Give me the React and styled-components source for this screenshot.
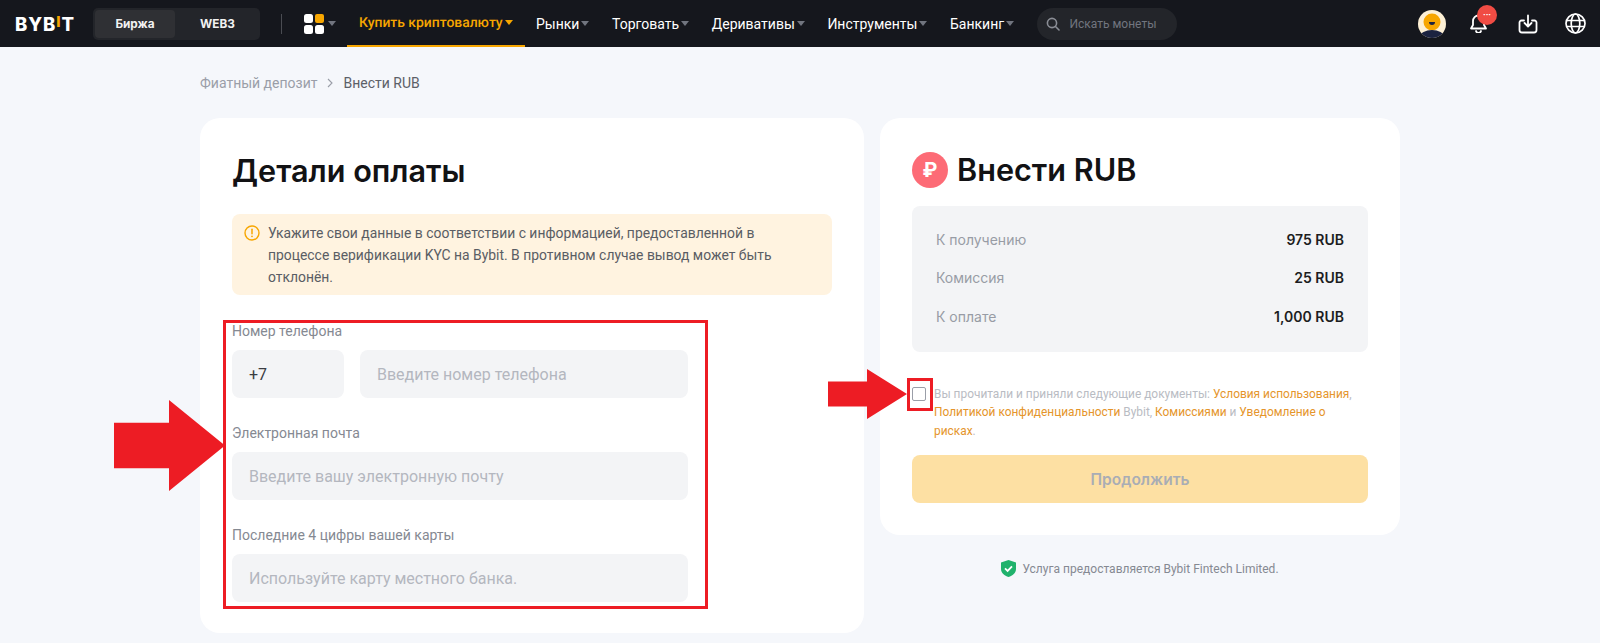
import React from "react";
import styled, { createGlobalStyle } from "styled-components";

const NAV_ITEMS = ["Рынки", "Торговать", "Деривативы", "Инструменты", "Банкинг"];

const SUMMARY = [
  { label: "К получению", value: "975 RUB" },
  { label: "Комиссия", value: "25 RUB" },
  { label: "К оплате", value: "1,000 RUB" },
];

const Global = createGlobalStyle`
  html, body {
    margin: 0;
    padding: 0;
    height: 643px;
    overflow: hidden;
    background: #f5f7fb;
    font-family: "Roboto", "Liberation Sans", sans-serif;
  }
  * { box-sizing: border-box; }
`;

const Header = styled.header`
  display: flex;
  align-items: center;
  height: 47px;
  padding-left: 15px;
  background: #15171d;
  color: #fff;
`;

const Logo = styled.div`
  width: 60px;
  font-family: "Inter", sans-serif;
  font-size: 18.500px;
  font-weight: 800;
  letter-spacing: 0.9px;
  white-space: nowrap;
`;

const LogoMark = styled.span`
  position: relative;
  top: -4px;
  color: #f7a600;
  font-size: 15px;
`;

const Tabs = styled.div`
  display: flex;
  width: 167px;
  height: 32px;
  margin-left: 18px;
  padding: 2px;
  border-radius: 5px;
  background: #23252a;
`;

const Tab = styled.div`
  display: flex;
  flex: ${({ $active }) => ($active ? "0 0 80px" : "1")};
  align-items: center;
  justify-content: center;
  padding-left: ${({ $active }) => ($active ? 0 : 2)}px;
  border-radius: 4px;
  background: ${({ $active }) => ($active ? "#2f3034" : "transparent")};
  font-family: "Inter", sans-serif;
  font-size: 11.800px;
  font-weight: 700;
  color: #f2f2f2;
`;

const Divider = styled.div`
  width: 1px;
  height: 20px;
  margin: 0 22px 0 21px;
  background: #4a4c52;
`;

const Caret = styled.span`
  display: inline-block;
  flex: none;
  width: 0;
  height: 0;
  margin-left: ${({ $gap }) => $gap ?? 2}px;
  border-left: 4px solid transparent;
  border-right: 4px solid transparent;
  border-top: 5px solid ${({ $color }) => $color || "#71757f"};
`;

const Apps = styled.div`
  display: flex;
  align-items: center;
  width: 43px;
`;

const Nav = styled.nav`
  display: flex;
  align-self: stretch;
`;

const NavItem = styled.div`
  display: flex;
  align-items: center;
  padding: 0 11.300px;
  font-size: 14px;
  color: #fff;
  white-space: nowrap;
`;

const ActiveNavItem = styled(NavItem)`
  padding: 0 12px;
  border-bottom: 2px solid #f7a600;
  font-size: 13.900px;
  font-weight: 500;
  text-rendering: geometricPrecision;
  color: #f7a600;
`;

const Search = styled.div`
  display: flex;
  align-items: center;
  width: 140px;
  height: 32px;
  margin-left: 12px;
  padding-left: 9px;
  border-radius: 16px;
  background: #23252a;
  font-size: 12px;
  color: #71757f;
`;

const SearchIcon = styled.svg`
  margin-right: 9px;
`;

const HeaderIcons = styled.div`
  display: flex;
  align-items: center;
  margin-left: auto;
  padding-right: 14px;
  gap: 27px;
`;

const BellWrap = styled.div`
  position: relative;
  display: flex;
  margin: 0 3px 0 -4px;
`;

const Badge = styled.span`
  position: absolute;
  top: -9px;
  left: 8px;
  display: flex;
  align-items: center;
  justify-content: center;
  width: 20px;
  height: 20px;
  border-radius: 50%;
  background: #f04c44;
  font-size: 9px;
  font-weight: 700;
  line-height: 1;
  color: #fff;
`;

const Main = styled.main`
  width: 1200px;
  margin-left: 200px;
`;

const Breadcrumbs = styled.div`
  display: flex;
  align-items: center;
  height: 71px;
  padding-top: 1px;
  font-size: 14px;
  color: #9a9ea8;
`;

const Chevron = styled.svg`
  margin: 0 9px;
`;

const Current = styled.span`
  color: #5c6068;
`;

const Columns = styled.div`
  display: grid;
  grid-template-columns: 664px 520px;
  gap: 16px;
  align-items: start;
`;

const Card = styled.section`
  padding: 32px;
  border-radius: 20px;
  background: #fff;
`;

const FormCard = styled(Card)`
  padding-bottom: 31px;
`;

const Title = styled.h1`
  margin: -1px 0 1px;
  font-family: "Inter", sans-serif;
  font-size: 30.600px;
  font-weight: 600;
  line-height: 44px;
  color: #121214;
`;

const CardHeading = styled(Title)`
  margin: 0;
`;

const Alert = styled.div`
  display: flex;
  gap: 8px;
  height: 81px;
  margin-top: 21px;
  padding: 8px 12px;
  border-radius: 8px;
  background: #fff3e0;
  font-size: 13.900px;
  line-height: 22px;
  color: #5a5d64;
`;

const AlertIcon = styled.span`
  flex: none;
  margin-top: 3px;
  line-height: 0;
`;

const AlertText = styled.div`
  max-width: 505px;
`;

const Form = styled.div`
  position: relative;
  display: flex;
  flex-direction: column;
  gap: 25px;
  width: 456px;
  margin-top: 26px;
`;

const RedFrame = styled.div`
  position: absolute;
  border: 3px solid #ed1c24;
  pointer-events: none;
`;

const FormFrame = styled(RedFrame)`
  inset: -1px -20px -7px -9px;
`;

const CheckFrame = styled(RedFrame)`
  top: -7px;
  left: -5px;
  width: 26px;
  height: 33px;
`;

const ArrowSvg = styled.svg`
  position: absolute;
  display: block;
`;

const FormArrow = styled(ArrowSvg)`
  top: 79px;
  left: -118px;
`;

const CheckArrow = styled(ArrowSvg)`
  top: -16px;
  left: -84px;
`;

const Label = styled.label`
  display: block;
  margin-bottom: 9px;
  font-size: 14px;
  line-height: 20px;
  color: #858992;
`;

const PhoneRow = styled.div`
  display: flex;
  gap: 16px;
`;

const inputBox = `
  height: 48px;
  border: 0;
  border-radius: 8px;
  background: #f3f4f6;
  font-family: inherit;
  font-size: 16px;
`;

const CodeBox = styled.div`
  ${inputBox}
  display: flex;
  flex: 0 0 112px;
  align-items: center;
  padding-left: 17px;
  color: #3a3c42;
`;

const Input = styled.input`
  ${inputBox}
  display: block;
  width: 100%;
  min-width: 0;
  padding: 0 17px;
  outline: none;

  &::placeholder {
    color: #b4b7bf;
    opacity: 1;
  }
`;

const CardTitle = styled.div`
  display: flex;
  align-items: center;
  gap: 9px;
  height: 40px;
`;

const RubleIcon = styled.span`
  display: flex;
  flex: none;
  align-items: center;
  justify-content: center;
  width: 36px;
  height: 36px;
  border-radius: 50%;
  background: #fd6b76;
  font-family: "Inter", sans-serif;
  font-size: 20px;
  font-weight: 700;
  color: #fff;
`;

const Summary = styled.div`
  margin-top: 16px;
  padding: 14px 24px 16px 24px;
  border-radius: 8px;
  background: #f3f4f6;
`;

const Row = styled.div`
  display: flex;
  align-items: center;
  justify-content: space-between;
  height: 38.500px;
  font-family: "Inter", sans-serif;
  font-size: 14px;
`;

const RowLabel = styled.span`
  color: #989ca5;
`;

const RowValue = styled.span`
  font-weight: 600;
  color: #1c1d21;
`;

const Terms = styled.div`
  position: relative;
  margin-top: 33px;
  padding-left: 22px;
  font-size: 11.900px;
  line-height: 18.500px;
  color: #b9bcc3;
`;

const CheckBox = styled.span`
  position: absolute;
  top: 2px;
  left: 0;
  width: 14px;
  height: 14px;
  border: 1px solid #9a9ea8;
  border-radius: 2px;
  background: #fff;
`;

const TermsLink = styled.a`
  color: #e5952b;
`;

const Submit = styled.button`
  display: block;
  width: 100%;
  height: 48px;
  margin-top: 15px;
  border: 0;
  border-radius: 8px;
  background: #fde0a3;
  font-family: "Inter", sans-serif;
  font-size: 15.500px;
  font-weight: 600;
  color: #a9adb5;
`;

const Provider = styled.div`
  display: flex;
  align-items: center;
  justify-content: center;
  gap: 6px;
  margin-top: 25px;
  font-size: 12px;
  color: #858992;
`;

const Arrow = ({ width, height, neck, className }) => {
  const mid = height / 2;
  const top = mid - height * 0.25;
  const bottom = mid + height * 0.25;
  return (
    <svg className={className} width={width} height={height} viewBox={`0 0 ${width} ${height}`}>
      <path
        d={`M0 ${top}H${neck}V0L${width} ${mid}L${neck} ${height}V${bottom}H0Z`}
        fill="#ed1c24"
      />
    </svg>
  );
};

const App = () => {
  return (
    <>
      <Global />
      <Header>
        <Logo>
          BYB<LogoMark>I</LogoMark>T
        </Logo>
        <Tabs>
          <Tab $active>Биржа</Tab>
          <Tab>WEB3</Tab>
        </Tabs>
        <Divider />
        <Apps>
          <svg width="20" height="20" viewBox="0 0 20 20">
            <rect x="0" y="0" width="9" height="9" rx="2.500" fill="#fff" />
            <rect x="11" y="0" width="9" height="9" rx="2" fill="#f7a600" />
            <rect x="0" y="11" width="9" height="9" rx="2.500" fill="#fff" />
            <rect x="11" y="11" width="9" height="9" rx="2.500" fill="#fff" />
          </svg>
          <Caret $gap={4} />
        </Apps>
        <Nav>
          <ActiveNavItem>
            Купить криптовалюту
            <Caret $color="#f7a600" />
          </ActiveNavItem>
          {NAV_ITEMS.map((item) => (
            <NavItem key={item}>
              {item}
              <Caret />
            </NavItem>
          ))}
        </Nav>
        <Search>
          <SearchIcon width="14" height="14" viewBox="0 0 14 14" fill="none" stroke="#8a8d95" strokeWidth="1.600">
            <circle cx="6" cy="6" r="4.600" />
            <path d="M9.500 9.500L13 13" strokeLinecap="round" />
          </SearchIcon>
          Искать монеты
        </Search>
        <HeaderIcons>
          <svg width="28" height="28" viewBox="0 0 28 28">
            <defs>
              <clipPath id="avatarClip">
                <circle cx="14" cy="14" r="14" />
              </clipPath>
            </defs>
            <g clipPath="url(#avatarClip)">
              <rect width="28" height="28" fill="#fdf0d5" />
              <circle cx="14" cy="12" r="8.500" fill="#f7a600" />
              <path d="M11 12h6a3 3 0 0 1-6 0Z" fill="#1c2340" />
              <ellipse cx="14" cy="27" rx="12" ry="7" fill="#1c2340" />
            </g>
          </svg>
          <BellWrap>
            <svg width="19" height="19" viewBox="0 0 19 19" fill="none" stroke="#fff" strokeWidth="1.800" strokeLinejoin="round">
              <path d="M9.500 1.500a5.500 5.500 0 0 0-5.500 5.500v4L2 14.500h15L15 11V7a5.500 5.500 0 0 0-5.500-5.500Z" />
              <path d="M7 17a2.600 2.600 0 0 0 5 0" strokeLinecap="round" />
            </svg>
            <Badge>···</Badge>
          </BellWrap>
          <svg width="20" height="20" viewBox="0 0 20 20" fill="none" stroke="#fff" strokeWidth="1.800" strokeLinecap="round" strokeLinejoin="round">
            <path d="M6 6.500H3.500a2 2 0 0 0-2 2V16a2.500 2.500 0 0 0 2.500 2.500h12a2.500 2.500 0 0 0 2.500-2.500V8.500a2 2 0 0 0-2-2H14" />
            <path d="M10 1.500V12M6.500 9l3.500 3.500L13.500 9" />
          </svg>
          <svg width="21" height="21" viewBox="0 0 21 21" fill="none" stroke="#fff" strokeWidth="1.700">
            <circle cx="10.500" cy="10.500" r="9.500" />
            <ellipse cx="10.500" cy="10.500" rx="4.300" ry="9.500" />
            <path d="M1.500 7.500h18M1.500 13.500h18" />
          </svg>
        </HeaderIcons>
      </Header>
      <Main>
        <Breadcrumbs>
          Фиатный депозит
          <Chevron width="8" height="10" viewBox="0 0 8 10" fill="none" stroke="#9a9ea8" strokeWidth="1.100">
            <path d="M2 1l4 4-4 4" />
          </Chevron>
          <Current>Внести RUB</Current>
        </Breadcrumbs>
        <Columns>
          <FormCard>
            <Title>Детали оплаты</Title>
            <Alert>
              <AlertIcon>
                <svg width="16" height="16" viewBox="0 0 16 16" fill="none">
                  <circle cx="8" cy="8" r="7" stroke="#f7a600" strokeWidth="1.400" />
                  <path d="M8 4.300v4.500" stroke="#f7a600" strokeWidth="1.500" strokeLinecap="round" />
                  <circle cx="8" cy="11.300" r="0.900" fill="#f7a600" />
                </svg>
              </AlertIcon>
              <AlertText>
                Укажите свои данные в соответствии с информацией, предоставленной в процессе верификации KYC на Bybit. В противном случае вывод может быть отклонён.
              </AlertText>
            </Alert>
            <Form>
              <FormFrame />
              <FormArrow as={Arrow} width={111} height={91} neck={55} />
              <div>
                <Label>Номер телефона</Label>
                <PhoneRow>
                  <CodeBox>+7</CodeBox>
                  <Input placeholder="Введите номер телефона" />
                </PhoneRow>
              </div>
              <div>
                <Label>Электронная почта</Label>
                <Input placeholder="Введите вашу электронную почту" />
              </div>
              <div>
                <Label>Последние 4 цифры вашей карты</Label>
                <Input placeholder="Используйте карту местного банка." />
              </div>
            </Form>
          </FormCard>
          <div>
            <Card>
              <CardTitle>
                <RubleIcon>₽</RubleIcon>
                <CardHeading as="h2">Внести RUB</CardHeading>
              </CardTitle>
              <Summary>
                {SUMMARY.map((row) => (
                  <Row key={row.label}>
                    <RowLabel>{row.label}</RowLabel>
                    <RowValue>{row.value}</RowValue>
                  </Row>
                ))}
              </Summary>
              <Terms>
                <CheckArrow as={Arrow} width={79} height={50} neck={39} />
                <CheckBox />
                <CheckFrame />
                Вы прочитали и приняли следующие документы: <TermsLink>Условия использования</TermsLink>,{" "}
                <TermsLink>Политикой</TermsLink> <TermsLink>конфиденциальности</TermsLink> Bybit,{" "}
                <TermsLink>Комиссиями</TermsLink> и <TermsLink>Уведомление о</TermsLink>{" "}
                <TermsLink>рисках</TermsLink>.
              </Terms>
              <Submit>Продолжить</Submit>
            </Card>
            <Provider>
              <svg width="15" height="17" viewBox="0 0 15 17">
                <path d="M7.500 0L15 2.500V9c0 4-3.500 6.800-7.500 8C3.500 15.800 0 13 0 9V2.500Z" fill="#20b26c" />
                <path d="M4 8.300l2.600 2.600L11 6.300" fill="none" stroke="#fff" strokeWidth="1.800" />
              </svg>
              Услуга предоставляется Bybit Fintech Limited.
            </Provider>
          </div>
        </Columns>
      </Main>
    </>
  );
};

export default App;
